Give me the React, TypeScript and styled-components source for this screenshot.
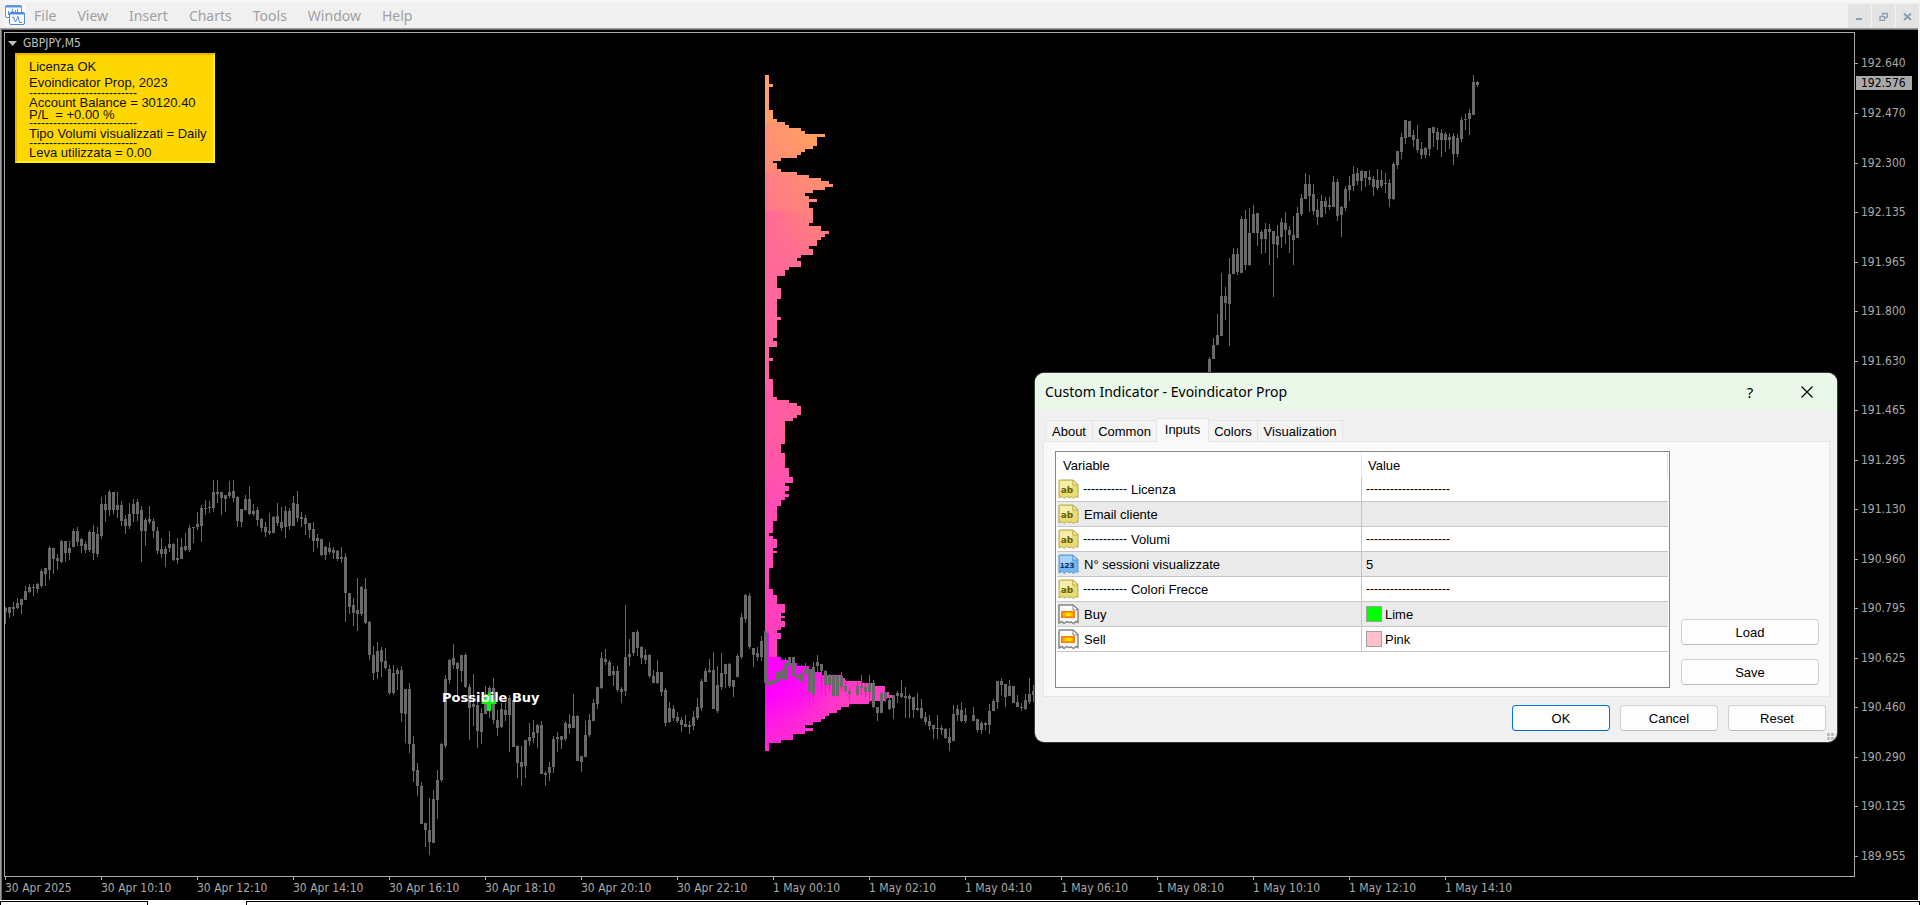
import React from 'react';
import styled, { createGlobalStyle } from 'styled-components';

const UI = '"Liberation Sans", Arial, sans-serif';
const SYS = '"Noto Sans", "Open Sans", sans-serif';
const AXIS = '"DejaVu Sans Condensed", "Noto Sans", sans-serif';
const LINE = '#a9a9a9';

const Global = createGlobalStyle`
  *, *::before, *::after { box-sizing: border-box; }
  body { margin: 0; background: #f0f0f0; font-family: ${UI}; }
  button { font: inherit; color: inherit; margin: 0; padding: 0; border: 0; background: none; }
`;

/* ---------- data ---------- */

/* Each bar is high,low,bodyTop,bodyBottom in window pixels; a run starts at x. */
const RUNS: { x: number; bars: string }[] = [
  {
    x: 0,
    bars: `607,624,608,612 607,618,607,613 602,616,607,609 598,609,603,608 599,614,599,605 586,600,591,600 584,593,587,592 584,596,587,588
583,593,584,589 569,588,571,586 568,586,568,574 546,580,548,570 548,574,548,559 554,570,558,561 540,563,541,562 541,562,541,553
541,560,548,553 529,547,531,547 527,546,531,542 538,553,539,546 541,553,544,550 530,552,532,550 525,560,532,553 527,557,534,554
497,539,504,536 495,522,504,510 490,516,492,510 492,514,492,510 492,518,505,510 501,526,505,521 515,534,519,526 503,529,514,526
499,522,504,514 499,521,502,514 506,562,510,531 518,546,520,531 506,524,519,522 518,538,521,531 527,554,531,551 538,558,549,554
546,567,549,554 531,552,544,548 543,561,544,560 538,564,558,560 538,559,547,559 533,551,546,550 525,552,528,550 527,543,527,528
512,530,524,527 505,542,508,526 500,515,508,509 501,513,507,508 480,512,492,508 480,503,492,494 492,515,492,498 495,512,495,499
481,498,492,496 480,502,491,498 496,527,497,521 509,527,509,522 495,511,499,510 486,515,499,514 504,516,511,514 507,526,510,520
518,532,519,528 522,537,527,532 513,535,531,533 516,533,517,533 503,526,516,523 507,531,522,528 506,538,511,527 508,530,511,526
496,526,503,526 491,522,504,518 512,527,517,519 515,535,518,524 523,538,523,530 522,552,529,541 534,548,538,541 539,556,539,555
546,560,547,555 542,554,548,552 547,559,550,553 550,561,551,559 547,563,557,559 553,622,557,593 593,614,593,607 598,626,605,613
578,631,610,614 586,616,587,614 578,624,589,623 621,660,622,655 646,680,655,673 642,679,651,672 647,677,650,662 648,669,661,668
665,695,669,693 665,695,673,693 668,690,670,674 666,722,670,713 689,743,689,714 683,753,689,744 736,782,744,771 763,796,770,786
782,824,786,824 823,847,823,830 798,855,830,842 790,843,799,843 770,819,780,800 743,782,744,780 675,748,679,746 659,684,660,680
644,669,658,665 662,696,663,669 655,682,655,671 653,688,655,687 684,740,687,708 674,726,704,707 698,748,705,731 708,744,713,732
686,714,694,714 686,718,688,705 678,724,688,720 710,736,720,728 703,728,709,727 703,721,710,715 695,752,698,715 700,747,700,747
745,778,746,763 746,786,762,767 740,778,740,766 723,746,737,741 720,743,732,738 724,748,725,733 721,774,725,774 771,786,773,775
762,781,767,773 736,773,739,767 732,752,737,739 736,749,736,740 721,741,723,739 714,734,724,728 694,728,716,728 715,761,716,761
756,772,756,762 721,757,735,757 714,737,720,735 699,721,703,721 687,709,687,704 652,689,658,688 649,665,659,662 660,676,662,676
666,686,671,675 666,692,671,690 687,703,689,692 605,696,657,691 639,666,654,657 632,656,632,653 630,656,632,648 646,664,647,658
649,664,655,660 654,678,655,676 670,683,676,683 660,684,672,683 672,696,672,692 688,726,690,723 702,723,708,722 705,721,709,718
712,723,717,721 717,732,720,725 715,727,724,727 721,734,725,727 711,730,717,726 698,720,707,718 679,711,681,708 668,682,671,682
659,673,670,672 652,709,670,709 666,713,685,711 653,690,673,687 664,688,664,674 663,688,664,686 680,697,680,687 654,677,656,677
613,659,617,657 594,623,595,619 593,649,596,647 648,667,648,655 647,661,653,657 636,661,641,657 631,683,631,683 662,687,681,686
678,708,680,684 670,688,672,682 664,682,670,679 658,683,663,680 657,666,657,666 657,692,657,676 673,682,675,679 665,687,673,682
663,676,668,674 669,707,669,692 662,702,667,695 655,672,662,666 664,694,664,671 670,696,671,685 674,692,675,685 674,696,675,696
675,697,676,696 672,691,676,687 680,693,686,691 688,701,691,694`,
  },
  {
    x: 852,
    bars: `681,697,686,695 675,695,686,688 683,697,687,692 675,702,683,692 680,708,683,707 707,721,707,713 692,713,693,713 692,702,692,699
696,710,700,709 695,719,695,708 691,703,693,696 680,698,693,697 687,718,696,698 694,718,696,699 697,718,697,710 693,711,708,710
699,719,708,718 712,725,717,722 715,730,721,726 725,739,725,729 715,739,728,729 725,735,728,730 728,739,729,738 728,751,737,743
705,741,714,741 705,721,709,715 702,722,710,721 708,723,715,721`,
  },
  {
    x: 968,
    bars: `707,721,715,721 719,732,719,730 721,734,723,730 722,730,723,725 704,734,711,725 699,711,701,711 681,709,681,702 678,695,681,685
684,707,684,697 680,696,686,696 686,703,686,703 695,707,702,707 703,711,707,708 694,710,700,709 678,704,694,702 685,702,691,695`,
  },
  {
    x: 1204,
    bars: `357,376,359,376 338,359,345,359 314,345,335,345 273,336,296,336 287,320,296,303 258,346,274,304 248,274,254,274 248,275,254,272
216,273,219,273 210,270,219,265 208,266,233,265 205,233,214,233 213,246,213,233 230,254,232,239 223,253,229,239 224,265,229,232
231,297,231,244 225,258,236,245 218,248,222,237 212,244,223,230 226,253,230,235 216,265,235,240 207,238,213,238 194,216,198,214
173,199,184,199 175,212,184,196 184,215,194,211 199,225,210,217 195,218,201,217 197,214,201,207 197,210,205,207 176,207,182,207
179,221,182,216 206,237,207,215 186,211,189,208 176,201,185,190 166,191,174,186 168,185,173,181 170,191,171,181 171,187,171,178
170,185,177,180 176,196,179,187 169,190,180,188 170,188,180,186 173,193,183,184 179,207,183,199 162,200,164,199 151,169,151,165
133,159,137,152 120,144,120,138 121,137,121,137 130,147,135,140 125,153,139,150 142,159,149,155 147,158,148,155 128,156,128,149
127,147,127,133 128,150,132,140 129,157,133,140 132,152,134,140 133,149,137,140 133,165,136,154 134,157,138,154 117,142,120,139
114,130,119,120 109,135,113,119 75,115,82,115 81,87,82,85`,
  },
];

/* Volume profile: pairs of [top, width in 4px steps]; each band ends where the next begins. */
const PROFILE: [number, number][] = [
  [75, 1], [84, 2], [87, 1], [110, 2], [119, 3], [122, 5], [125, 6], [128, 9], [131, 10], [134, 15],
  [137, 13], [146, 12], [149, 10], [152, 9], [155, 8], [158, 4], [161, 2], [163, 3], [169, 4], [172, 8],
  [175, 11], [178, 14], [181, 16], [184, 17], [187, 15], [190, 12], [193, 10], [196, 11], [199, 13], [202, 11],
  [208, 12], [223, 11], [226, 14], [231, 16], [234, 15], [237, 14], [240, 13], [246, 11], [249, 12], [255, 9],
  [258, 8], [261, 9], [267, 6], [270, 5], [276, 3], [288, 4], [299, 3], [317, 4], [320, 3], [338, 2],
  [341, 3], [347, 1], [358, 2], [361, 1], [379, 2], [397, 3], [400, 6], [403, 8], [406, 9], [415, 8],
  [418, 7], [421, 5], [444, 4], [453, 5], [468, 6], [477, 7], [483, 5], [486, 6], [491, 5], [494, 6],
  [497, 5], [500, 4], [506, 3], [521, 2], [533, 1], [536, 2], [539, 3], [548, 2], [551, 3], [553, 2],
  [568, 1], [589, 2], [595, 3], [604, 5], [613, 4], [616, 5], [618, 4], [621, 5], [627, 4], [630, 3],
  [633, 4], [639, 3], [657, 4], [660, 6], [663, 8], [666, 11], [669, 12], [672, 14], [675, 19], [678, 20],
  [681, 24], [683, 27], [686, 30], [692, 31], [695, 32], [698, 30], [701, 26], [704, 21], [707, 19], [710, 18],
  [713, 16], [716, 15], [719, 14], [722, 12], [725, 10], [728, 12], [731, 10], [734, 7], [740, 4], [743, 1],
];
const PROFILE_END = 751;
const PROFILE_X = 760;
const PLOT_TOP = 33;

const PRICES = [
  192.64, 192.47, 192.3, 192.135, 191.965, 191.8, 191.63, 191.465, 191.295, 191.13, 190.96, 190.795, 190.625,
  190.46, 190.29, 190.125, 189.955,
];
const PX_PER_POINT = 296;

const TIMES = [
  '30 Apr 2025', '30 Apr 10:10', '30 Apr 12:10', '30 Apr 14:10', '30 Apr 16:10', '30 Apr 18:10', '30 Apr 20:10',
  '30 Apr 22:10', '1 May 00:10', '1 May 02:10', '1 May 04:10', '1 May 06:10', '1 May 08:10', '1 May 10:10',
  '1 May 12:10', '1 May 14:10',
];

type Kind = 'text' | 'number' | 'color';
type Input = { kind: Kind; name: string; value: string; section?: boolean; swatch?: string };
const DASHES = '---------------------';
const INPUTS: Input[] = [
  { kind: 'text', name: 'Licenza', value: DASHES, section: true },
  { kind: 'text', name: 'Email cliente', value: '' },
  { kind: 'text', name: 'Volumi', value: DASHES, section: true },
  { kind: 'number', name: 'N° sessioni visualizzate', value: '5' },
  { kind: 'text', name: 'Colori Frecce', value: DASHES, section: true },
  { kind: 'color', name: 'Buy', value: 'Lime', swatch: '#00ff00' },
  { kind: 'color', name: 'Sell', value: 'Pink', swatch: '#ffc0cb' },
];

/* ---------- shell ---------- */

const Shell = styled.div`
  display: grid;
  grid-template-rows: 28px minmax(0, 1fr) 5px;
  height: 100vh;
  overflow: hidden;
`;

const MenuBar = styled.header`
  display: flex;
  align-items: stretch;
  border-top: 3px solid #f5f5f5;
  background: #f0f0f0;
`;

const Logo = styled.svg`
  margin: 1px 0 0 4px;
  flex: none;
`;

const Menu = styled.nav`
  display: flex;
  flex: 1;
  gap: 21px;
  padding-left: 8px;
`;

const MenuItem = styled.button`
  font: 14px/24px ${SYS};
  color: #a0a0a0;
`;

const WindowControls = styled.div`
  display: flex;
  gap: 1px;
  padding: 1px 1px 0 0;
`;

const WindowButton = styled.button`
  display: flex;
  align-items: center;
  justify-content: center;
  width: 23px;
  background: #e4e4e4;
`;

const ChartWindow = styled.main`
  position: relative;
  display: grid;
  grid-template-columns: minmax(0, 1fr) 63px;
  grid-template-rows: minmax(0, 1fr) 23px;
  margin-right: 2px;
  padding: 2px 0 0 2px;
  background: #000;
  border-top: 1px solid #a0a0a0;
  border-left: 1px solid #a0a0a0;
  box-shadow: inset 1px 1px 0 #696969;
`;

const Plot = styled.section`
  position: relative;
  margin: 1px 0 0 1px;
  border: 1px solid ${LINE};
  overflow: hidden;
`;

const PlotCanvas = styled.svg`
  display: block;
  width: 100%;
  height: 100%;
`;

const SymbolLabel = styled.div`
  position: absolute;
  top: 2px;
  left: 3px;
  display: flex;
  align-items: center;
  gap: 6px;
  font: 12px/16px ${AXIS};
  color: #c0c0c0;
`;

const InfoBox = styled.div`
  position: absolute;
  top: 20px;
  left: 10px;
  width: 200px;
  height: 110px;
  padding: 4px 0 0 12px;
  background: #ffd700;
  border: 2px solid;
  border-color: #e6b400 #fff21a #fff21a #e6b400;
  color: #111;
  white-space: pre;
`;

const InfoLine = styled.div<{ $h: number }>`
  height: ${(p) => p.$h}px;
  font-size: 13px;
  line-height: ${(p) => p.$h}px;
`;

const InfoRule = styled.div`
  height: 6px;
  font-size: 12px;
  line-height: 4px;
`;

const PriceAxis = styled.aside`
  position: relative;
  padding-top: 8px;
  font: 12px/16px ${AXIS};
  color: ${LINE};
`;

const PriceRow = styled.div<{ $h: number }>`
  display: flex;
  align-items: flex-start;
  height: ${(p) => p.$h}px;
`;

const PriceTick = styled.span`
  width: 3px;
  height: 1px;
  margin: 24px 3px 0 0;
  background: ${LINE};
`;

const PriceText = styled.span`
  padding-top: 16px;
`;

const LastPrice = styled.div`
  position: absolute;
  top: 45px;
  left: 1px;
  width: 56px;
  padding-left: 5px;
  background: ${LINE};
  color: #000;
  line-height: 14px;
`;

const TimeAxis = styled.footer`
  grid-column: 1 / -1;
  display: flex;
  overflow: hidden;
  padding-left: 2px;
  font: 12px/17px ${AXIS};
  color: ${LINE};
`;

const TimeCell = styled.div`
  flex: none;
  width: 96px;
  white-space: nowrap;
  &::before {
    content: '';
    display: block;
    width: 1px;
    height: 3px;
    background: ${LINE};
  }
`;

const TabStrip = styled.div`
  display: flex;
  background: #fff;
  padding-top: 1px;
`;

const StripPart = styled.div<{ $w?: number; $open?: boolean }>`
  flex: ${(p) => (p.$w ? `0 0 ${p.$w}px` : '1')};
  border: solid #000;
  border-width: ${(p) => (p.$open ? '0' : '1px 1px 0 1px')};
`;

/* ---------- dialog ---------- */

const Dialog = styled.section`
  position: absolute;
  left: 1034px;
  top: 344px;
  width: 802px;
  background: #f0f0f0;
  border-radius: 9px;
  box-shadow: 0 0 0 1px #3a3a3a;
  color: #000;
  font-size: 13px;
  overflow: hidden;
`;

const TitleBar = styled.header`
  display: flex;
  align-items: center;
  height: 37px;
  padding: 0 4px 0 10px;
  background: #eaf8ea;
  font-family: ${SYS};
`;

const Title = styled.h1`
  flex: 1;
  margin: 0;
  font-size: 14px;
  line-height: 20px;
  font-weight: 400;
`;

const TitleButton = styled.button`
  display: flex;
  align-items: center;
  justify-content: center;
  width: 52px;
  height: 36px;
  font-size: 15px;
  & + & { margin-left: 5px; }
`;

const Tabs = styled.div`
  display: flex;
  align-items: flex-end;
  height: 31px;
  padding-left: 10px;
`;

const Tab = styled.button<{ $w: number; $active?: boolean }>`
  position: relative;
  width: ${(p) => p.$w}px;
  height: ${(p) => (p.$active ? 24 : 21)}px;
  margin-bottom: ${(p) => (p.$active ? -1 : 0)}px;
  padding-bottom: ${(p) => (p.$active ? 3 : 0)}px;
  background: ${(p) => (p.$active ? '#f9f9f9' : '#f3f3f3')};
  border: 1px solid #e5e5e5;
  border-bottom: 0;
  & + & { border-left-width: ${(p) => (p.$active ? 1 : 0)}px; }
`;

const Panel = styled.div`
  display: flex;
  justify-content: space-between;
  margin: 0 7px 0 8px;
  padding: 9px 10px 8px 11px;
  background: #f9f9f9;
  border: 1px solid #e5e5e5;
`;

const ListBox = styled.div`
  width: 615px;
  height: 237px;
  padding: 1px;
  background: #fff;
  border: 1px solid #828790;
`;

const Grid = styled.table`
  width: 100%;
  border-spacing: 0;
  table-layout: fixed;
`;

const HeadCell = styled.th<{ $w?: number }>`
  width: ${(p) => (p.$w ? `${p.$w}px` : 'auto')};
  height: 24px;
  padding: 0 6px;
  border-right: 1px solid #e5e5e5;
  font-weight: 400;
  text-align: left;
`;

const Row = styled.tr`
  &:nth-child(even) { background: #eaeaea; }
`;

const Cell = styled.td`
  height: 25px;
  padding: 0 1px;
  border-bottom: 1px solid #c6c6c6;
  &:first-child { border-right: 1px solid #c6c6c6; }
  & + & { padding-left: 4px; }
`;

const CellInner = styled.div<{ $gap: number }>`
  display: flex;
  align-items: center;
  gap: ${(p) => p.$gap}px;
  height: 24px;
`;

const Dashes = styled.span`
  font-size: 12px;
`;

const Swatch = styled.span<{ $c: string }>`
  width: 16px;
  height: 16px;
  border: 1px solid #a0a0a0;
  background: ${(p) => p.$c};
`;

const SideActions = styled.div`
  display: flex;
  flex-direction: column;
  justify-content: flex-end;
  gap: 14px;
  padding-bottom: 3px;
`;

const Actions = styled.footer`
  display: flex;
  justify-content: flex-end;
  gap: 10px;
  padding: 8px 11px 11px;
`;

const PushButton = styled.button<{ $w: number; $primary?: boolean }>`
  width: ${(p) => p.$w}px;
  height: 26px;
  background: #fdfdfd;
  border: 1px solid ${(p) => (p.$primary ? '#0078d4' : '#d0d0d0')};
  border-bottom-color: ${(p) => (p.$primary ? '#0067c0' : '#bcbcbc')};
  border-radius: 4px;
`;

const Grip = styled.svg`
  position: absolute;
  right: 3px;
  bottom: 2px;
`;

/* ---------- drawings ---------- */

function AppLogo() {
  return (
    <Logo width="22" height="22" viewBox="0 0 22 22" aria-hidden="true">
      <rect width="22" height="22" fill="#f8f8f8" />
      <rect x="1.5" y="1.5" width="16" height="12" rx="1.5" fill="#fff" stroke="#5b93e6" />
      <path d="M1.5 2.5H17.5" stroke="#5b93e6" strokeWidth="2" />
      <path d="M4.5 11V7M4 9.5H6M8.5 10V5M7 8H10M11.5 9V6M13.5 8V5" stroke="#5b93e6" fill="none" />
      <rect x="5.5" y="8.5" width="15" height="12" rx="1.5" fill="#fff" stroke="#4c8ae4" />
      <path d="M5.5 9.5H20.5" stroke="#4c8ae4" strokeWidth="2" />
      <path d="M8 13.5L9.500 13L11.500 18L14 12.500L15.500 18.500H18" stroke="#4c8ae4" fill="none" />
    </Logo>
  );
}

const PAPER: Record<Kind, { fill: string; light: string; edge: string }> = {
  text: { fill: '#e8dc72', light: '#f8f2b4', edge: '#b8a850' },
  number: { fill: '#74b6ee', light: '#b4dcff', edge: '#5c9ad0' },
  color: { fill: '#fafafa', light: '#ffffff', edge: '#868686' },
};

function TypeIcon({ kind }: { kind: Kind }) {
  const p = PAPER[kind];
  return (
    <svg width="21" height="21" viewBox="0 0 21 21" aria-hidden="true">
      <path
        d="M1.500 1H15L20 5.500V18.500L18 17.500L15.500 19.500L13.500 18L11 18.500L8.500 17.500L6 19.500L4 17.500L1 19V1.500Z"
        fill={p.fill}
        stroke={p.edge}
        strokeWidth={kind === 'color' ? 1.5 : 1}
      />
      <path d="M2 2H14V8L2 12Z" fill={p.light} opacity="0.8" />
      <path d="M15 1V6H20Z" fill={p.light} stroke={p.edge} />
      {kind === 'color' && (
        <>
          <rect x="3" y="7" width="14" height="7" fill="#ff8000" />
          <rect x="5" y="8.5" width="10" height="4" fill="#ffb400" />
          <rect x="8" y="9" width="5" height="3" fill="#ffe600" />
        </>
      )}
      {kind === 'text' && (
        <text x="9" y="14" textAnchor="middle" fontFamily="DejaVu Sans" fontWeight="700" fontSize="9" fill="#6a6010">
          ab
        </text>
      )}
      {kind === 'number' && (
        <text x="9" y="14" textAnchor="middle" fontFamily="DejaVu Sans" fontWeight="700" fontSize="7" fill="#0c3058">
          123
        </text>
      )}
    </svg>
  );
}

function Candles() {
  return (
    <g fill="#696969" shapeRendering="crispEdges">
      {RUNS.map((run) =>
        run.bars.split(/\s+/).map((bar, i) => {
          const [high, low, top, bottom] = bar.split(',').map(Number);
          const x = run.x + i * 4;
          return <path key={x} d={`M${x} ${high}h1V${low}h-1ZM${x - 1} ${top}h3V${bottom}h-3Z`} />;
        }),
      )}
    </g>
  );
}

function profilePath(from: number, to: number) {
  return PROFILE.map(([top, w], i) => {
    const end = i + 1 < PROFILE.length ? PROFILE[i + 1][0] : PROFILE_END;
    return top >= from && top < to ? `M${PROFILE_X} ${top}h${w * 4}V${end}h${-w * 4}Z` : '';
  }).join('');
}

const UPPER = profilePath(0, 657);
const LOWER = profilePath(657, 900);

function Stops({ list }: { list: [number, string][] }) {
  return (
    <>
      {list.map(([y, c]) => (
        <stop key={y} offset={(y - 75) / 676} stopColor={c} />
      ))}
    </>
  );
}

function VolumeProfile() {
  const span = { gradientUnits: 'userSpaceOnUse' as const, x1: 0, x2: 0, y1: 75, y2: 751 };
  return (
    <g shapeRendering="crispEdges">
      <defs>
        <linearGradient id="inner" {...span}>
          <Stops
            list={[
              [75, '#ffa066'], [121, '#ffa066'], [123, '#ff9274'], [170, '#ff8c78'], [176, '#ff7c86'], [209, '#ff7a88'],
              [212, '#ff6a96'], [290, '#ff689e'], [350, '#ff64a2'], [410, '#ff58aa'], [435, '#ff5aa4'], [500, '#ff4eb6'],
              [600, '#ff40be'], [656, '#ff3cc0'],
            ]}
          />
        </linearGradient>
        <linearGradient id="outer" {...span}>
          <Stops
            list={[
              [75, '#ffa066'], [140, '#ffa060'], [180, '#ff8f70'], [210, '#ff8478'], [250, '#ff7488'], [290, '#ff66a0'],
              [350, '#ff62a2'], [400, '#ff6696'], [435, '#ff6496'], [500, '#ff50b0'], [656, '#ff40b8'],
            ]}
          />
        </linearGradient>
        <linearGradient id="deepInner" {...span}>
          <Stops list={[[657, '#ff00ff'], [695, '#ff00ff'], [720, '#ff16e8'], [751, '#ff26d8']]} />
        </linearGradient>
        <linearGradient id="fade" gradientUnits="userSpaceOnUse" x1={PROFILE_X} x2={PROFILE_X + 50} y1="0" y2="0">
          <stop offset="0" stopColor="#000" />
          <stop offset="1" stopColor="#fff" />
        </linearGradient>
        <linearGradient id="deepFade" gradientUnits="userSpaceOnUse" x1={PROFILE_X + 10} x2={PROFILE_X + 70} y1="690" y2="715">
          <stop offset="0" stopColor="#000" />
          <stop offset="0.4" stopColor="#444" />
          <stop offset="0.65" stopColor="#999" />
          <stop offset="1" stopColor="#fff" />
        </linearGradient>
        <mask id="fadeMask" maskUnits="userSpaceOnUse" x="700" y="0" width="300" height="900">
          <rect x="700" y="0" width="300" height="900" fill="url(#fade)" />
        </mask>
        <mask id="deepMask" maskUnits="userSpaceOnUse" x="700" y="0" width="300" height="900">
          <rect x="700" y="0" width="300" height="900" fill="url(#deepFade)" />
        </mask>
      </defs>
      <path d={UPPER} fill="url(#inner)" />
      <path d={UPPER} fill="url(#outer)" mask="url(#fadeMask)" />
      <path d={LOWER} fill="url(#deepInner)" />
      <path d={LOWER} fill="#ff3cc4" mask="url(#deepMask)" />
      <rect x={PROFILE_X} y="633" width="4" height="24" fill="#ff00ff" />
    </g>
  );
}

function MenuGlyph({ kind }: { kind: 'min' | 'restore' | 'close' }) {
  return (
    <svg width="9" height="9" viewBox="0 0 9 9" fill="none" stroke="#8c9eb2" strokeWidth="2" aria-hidden="true">
      {kind === 'min' && <path d="M1 7H7" />}
      {kind === 'restore' && (
        <path d="M3 1.5H8.5V5.5M3.5 1V3M8.5 5.5H6M0.5 4.5H6M1 4V8.5H5.5V4" strokeWidth="1.3" />
      )}
      {kind === 'close' && <path d="M1 1.5L8 8M8 1.5L1 8" />}
    </svg>
  );
}

/* ---------- page ---------- */

export default function App() {
  return (
    <Shell>
      <Global />
      <MenuBar>
        <AppLogo />
        <Menu>
          {['File', 'View', 'Insert', 'Charts', 'Tools', 'Window', 'Help'].map((m) => (
            <MenuItem key={m}>{m}</MenuItem>
          ))}
        </Menu>
        <WindowControls>
          <WindowButton aria-label="Minimize"><MenuGlyph kind="min" /></WindowButton>
          <WindowButton aria-label="Restore"><MenuGlyph kind="restore" /></WindowButton>
          <WindowButton aria-label="Close chart"><MenuGlyph kind="close" /></WindowButton>
        </WindowControls>
      </MenuBar>

      <ChartWindow>
        <Plot>
          <PlotCanvas role="img" aria-label="GBPJPY five minute chart">
            <g transform={`translate(0 ${-PLOT_TOP})`}>
              <VolumeProfile />
              <Candles />
              <path d="M484 692L492 704H486V711H482V704H476Z" fill="#00ff00" />
              <text x="437" y="702" fontFamily="DejaVu Sans, sans-serif" fontWeight="700" fontSize="13" fill="#fff">
                Possibile Buy
              </text>
            </g>
          </PlotCanvas>
          <SymbolLabel>
            <svg width="9" height="5" aria-hidden="true"><path d="M0 0H9L4.5 5Z" fill="#c0c0c0" /></svg>
            GBPJPY,M5
          </SymbolLabel>
          <InfoBox>
            <InfoLine $h={16}>Licenza OK</InfoLine>
            <InfoLine $h={16}>Evoindicator Prop, 2023</InfoLine>
            <InfoRule>---------------------------</InfoRule>
            <InfoLine $h={12}>Account Balance = 30120.40</InfoLine>
            <InfoLine $h={12}>P/L  = +0.00 %</InfoLine>
            <InfoRule>---------------------------</InfoRule>
            <InfoLine $h={14}>Tipo Volumi visualizzati = Daily</InfoLine>
            <InfoRule>---------------------------</InfoRule>
            <InfoLine $h={12}>Leva utilizzata = 0.00</InfoLine>
          </InfoBox>
        </Plot>

        <PriceAxis>
          {PRICES.map((price, i) => (
            <PriceRow key={price} $h={i + 1 < PRICES.length ? Math.round((price - PRICES[i + 1]) * PX_PER_POINT) : 40}>
              <PriceTick />
              <PriceText>{price.toFixed(3)}</PriceText>
            </PriceRow>
          ))}
          <LastPrice>192.576</LastPrice>
        </PriceAxis>

        <TimeAxis>
          {TIMES.map((t) => (
            <TimeCell key={t}>{t}</TimeCell>
          ))}
        </TimeAxis>

        <Dialog role="dialog" aria-labelledby="dialog-title">
          <TitleBar>
            <Title id="dialog-title">Custom Indicator - Evoindicator Prop</Title>
            <TitleButton aria-label="Help">?</TitleButton>
            <TitleButton aria-label="Close">
              <svg width="12" height="12" viewBox="0 0 12 12" aria-hidden="true">
                <path d="M0.5 0.5L11.5 11.5M11.5 0.5L0.5 11.5" stroke="#000" strokeWidth="1.2" />
              </svg>
            </TitleButton>
          </TitleBar>
          <Tabs role="tablist">
            <Tab role="tab" $w={48}>About</Tab>
            <Tab role="tab" $w={64}>Common</Tab>
            <Tab role="tab" aria-selected $w={52} $active>Inputs</Tab>
            <Tab role="tab" $w={49}>Colors</Tab>
            <Tab role="tab" $w={85}>Visualization</Tab>
          </Tabs>
          <Panel>
            <ListBox>
              <Grid>
                <thead>
                  <tr>
                    <HeadCell $w={305}>Variable</HeadCell>
                    <HeadCell>Value</HeadCell>
                  </tr>
                </thead>
                <tbody>
                  {INPUTS.map((row) => (
                    <Row key={row.name}>
                      <Cell>
                        <CellInner $gap={row.section ? 4 : 5}>
                          <TypeIcon kind={row.kind} />
                          {row.section && <Dashes>-----------</Dashes>}
                          {row.name}
                        </CellInner>
                      </Cell>
                      <Cell>
                        <CellInner $gap={3}>
                          {row.swatch && <Swatch $c={row.swatch} />}
                          {row.section ? <Dashes>{row.value}</Dashes> : row.value}
                        </CellInner>
                      </Cell>
                    </Row>
                  ))}
                </tbody>
              </Grid>
            </ListBox>
            <SideActions>
              <PushButton $w={138}>Load</PushButton>
              <PushButton $w={138}>Save</PushButton>
            </SideActions>
          </Panel>
          <Actions>
            <PushButton $w={98} $primary>OK</PushButton>
            <PushButton $w={98}>Cancel</PushButton>
            <PushButton $w={98}>Reset</PushButton>
          </Actions>
          <Grip width="7" height="7" aria-hidden="true">
            <path d="M0 0h3v3h-3ZM4 0h3v3h-3ZM0 4h3v3h-3ZM4 4h3v3h-3Z" fill="#bdbdbd" />
          </Grip>
        </Dialog>
      </ChartWindow>

      <TabStrip>
        <StripPart $w={148} />
        <StripPart $w={98} $open />
        <StripPart />
      </TabStrip>
    </Shell>
  );
}
